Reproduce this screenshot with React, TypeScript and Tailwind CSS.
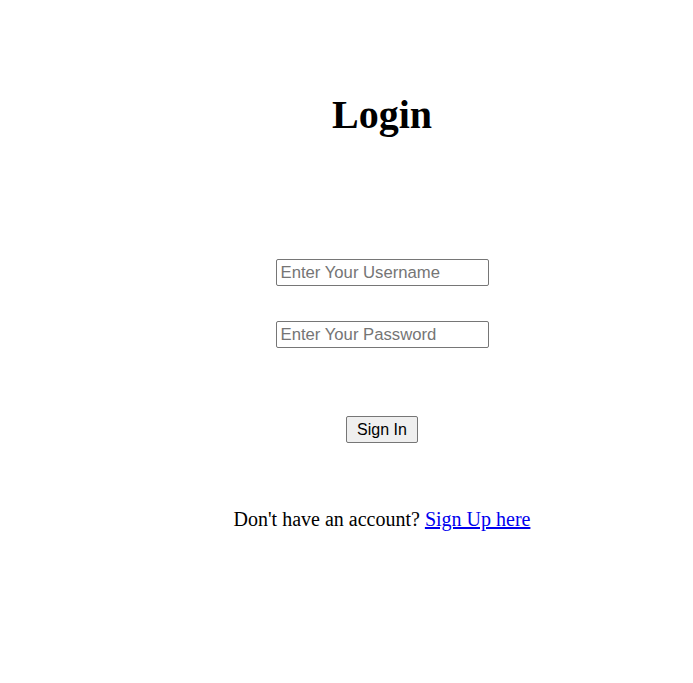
export default function App() {
  return (
    <div className="min-h-[683px] bg-white pl-[71px] font-['Liberation_Serif',serif] text-black">
      <div className="flex flex-col items-center">
        <h1 className="mt-[92px] text-[40px] font-bold leading-[46px]">Login</h1>

        <form className="mt-[121px] flex flex-col items-center" onSubmit={(e) => e.preventDefault()}>
          <input
            type="text"
            placeholder="Enter Your Username"
            className="h-[27px] w-[213px] rounded-[2px] border border-[#767676] px-[4px] font-['Liberation_Sans',sans-serif] text-[16.7px] placeholder:text-[#757575]"
          />
          <input
            type="password"
            placeholder="Enter Your Password"
            className="mt-[35px] h-[27px] w-[213px] rounded-[2px] border border-[#767676] px-[4px] font-['Liberation_Sans',sans-serif] text-[16.7px] placeholder:text-[#757575]"
          />
          <button
            type="submit"
            className="mt-[68px] h-[27px] w-[72px] rounded-[2px] border border-[#767676] bg-[#efefef] font-['Liberation_Sans',sans-serif] text-[16px] text-black"
          >
            Sign In
          </button>
        </form>

        <p className="mt-[65px] text-[20px] leading-[23px]">
          Don't have an account?{" "}
          <a href="#" className="text-[#0000ee] underline">
            Sign Up here
          </a>
        </p>
      </div>
    </div>
  );
}
